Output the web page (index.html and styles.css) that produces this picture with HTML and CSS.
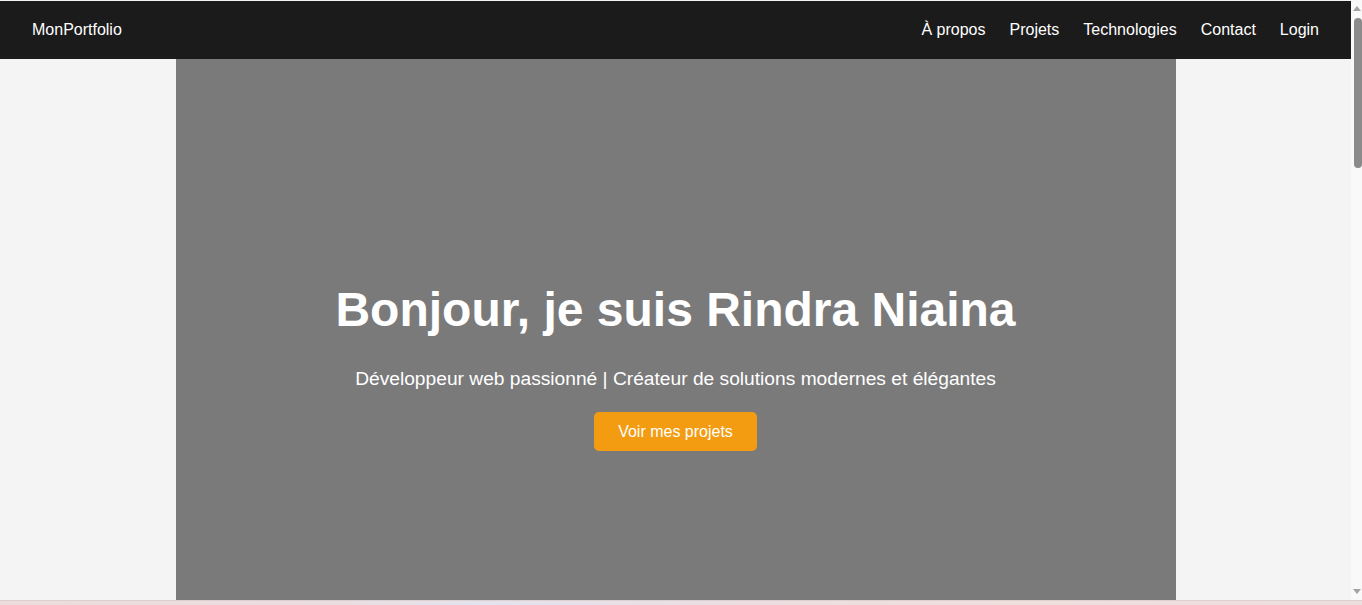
FILE: index.html
```html
<!DOCTYPE html>
<html lang="fr">
<head>
<meta charset="utf-8">
<title>MonPortfolio</title>
<link rel="stylesheet" href="styles.css">
</head>
<body>
<div class="page">
  <header class="navbar">
    <a class="logo" href="#">MonPortfolio</a>
    <nav class="nav-links">
      <a href="#about">À propos</a>
      <a href="#projects">Projets</a>
      <a href="#tech">Technologies</a>
      <a href="#contact">Contact</a>
      <a href="#login">Login</a>
    </nav>
  </header>
  <main class="container">
    <section class="hero">
      <h1 class="hero-title">Bonjour, je suis Rindra Niaina</h1>
      <p class="hero-subtitle">Développeur web passionné | Créateur de solutions modernes et élégantes</p>
      <a class="btn" href="#projects">Voir mes projets</a>
    </section>
  </main>
</div>
<div class="scrollbar">
  <div class="sb-arrow sb-up"></div>
  <div class="sb-thumb"></div>
  <div class="sb-arrow sb-down"></div>
</div>
<div class="bottom-strip"></div>
</body>
</html>
```

FILE: styles.css
```css
html, body {
  margin: 0;
  padding: 0;
}
html {
  overflow: hidden;
}
body {
  background: #f4f4f4;
  font-family: "Liberation Sans", Arial, sans-serif;
  padding-top: 1px;
  width: 1351px;
}
.page {
  width: 1351px;
}
.navbar {
  background: #1b1b1b;
  height: 58px;
  display: flex;
  align-items: center;
  justify-content: space-between;
  padding: 0 32px;
}
.logo {
  color: #fff;
  text-decoration: none;
  font-size: 16px;
}
.nav-links {
  display: flex;
  gap: 24px;
}
.nav-links a {
  color: #fff;
  text-decoration: none;
  font-size: 16px;
}
.container {
  max-width: 1000px;
  margin: 0 auto;
}
.hero {
  background: #7a7a7a;
  color: #fff;
  text-align: center;
  padding: 223px 20px 200px;
  display: flex;
  flex-direction: column;
  align-items: center;
}
.hero-title {
  font-size: 48px;
  font-weight: bold;
  margin: 0 0 31px;
  line-height: 55px;
}
.hero-subtitle {
  font-size: 19.2px;
  line-height: 22px;
  margin: 0 0 22px;
}
.btn {
  background: #f39c12;
  color: #fff;
  text-decoration: none;
  font-size: 16px;
  line-height: 19px;
  padding: 10px 24px;
  border-radius: 5px;
}
.scrollbar {
  position: fixed;
  top: 0;
  right: 0;
  width: 11px;
  height: 600px;
  background: #f9f9f9;
  display: flex;
  flex-direction: column;
  align-items: center;
}
.sb-arrow {
  width: 0;
  height: 0;
  border-left: 4px solid transparent;
  border-right: 4px solid transparent;
}
.sb-up {
  margin-top: 6px;
  border-bottom: 5px solid #a3a3a3;
}
.sb-thumb {
  margin-top: 7px;
  width: 8px;
  height: 150px;
  background: #8b8b8b;
  border-radius: 4px;
  margin-left: 3px;
}
.sb-down {
  margin-top: auto;
  margin-bottom: 6px;
  border-top: 5px solid #a3a3a3;
}
.bottom-strip {
  position: fixed;
  left: 0;
  bottom: 0;
  width: 1362px;
  height: 5px;
  background: linear-gradient(90deg, #ecdcdc 0%, #eadde0 25%, #e3e3ee 35%, #ebdde0 55%, #f0e0dc 75%, #ecdede 100%);
  border-top: 1px solid #dcd0d0;
  box-sizing: border-box;
}
```
